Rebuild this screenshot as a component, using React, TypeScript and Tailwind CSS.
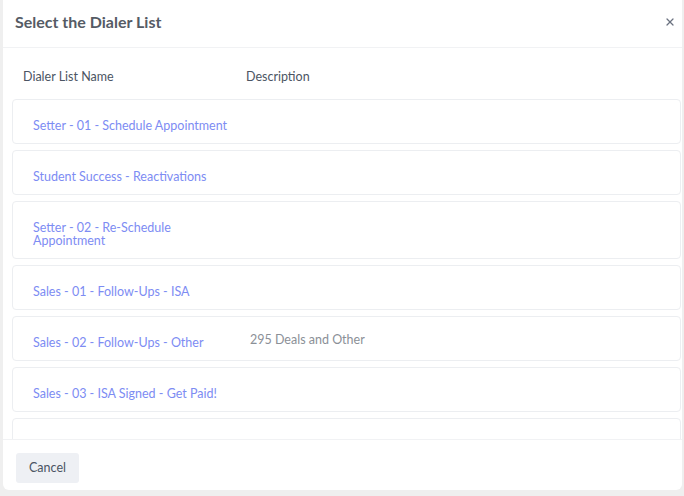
import { X } from "lucide-react";

const lists = [
  { name: "Setter - 01 - Schedule Appointment", description: "" },
  { name: "Student Success - Reactivations", description: "" },
  { name: "Setter - 02 - Re-Schedule Appointment", description: "" },
  { name: "Sales - 01 - Follow-Ups - ISA", description: "" },
  { name: "Sales - 02 - Follow-Ups - Other", description: "295 Deals and Other" },
  { name: "Sales - 03 - ISA Signed - Get Paid!", description: "" },
];

export default function App() {
  return (
    <div className="h-[496px] w-[684px] overflow-hidden bg-[#efefef] font-['Lato',sans-serif]">
      <div className="ml-[3px] flex h-[490px] w-[679px] flex-col rounded-b-md bg-white">
        {/* header */}
        <div className="flex h-[48px] shrink-0 items-center justify-between border-b border-[#f1f2f4] pb-[4px] pl-[12px] pr-[2px]">
          <h2 className="text-[16px] font-bold text-[#555b65]">Select the Dialer List</h2>
          <button className="p-1 text-[#6b7280]">
            <X className="h-3 w-3" strokeWidth={2.5} />
          </button>
        </div>

        {/* list */}
        <div className="flex-1 overflow-hidden pl-[9px] pr-[1px]">
          <div className="flex h-[51px] items-center pt-[8px] text-[12.5px] text-[#4b5563]">
            <div className="w-[234px] pl-[11px]">Dialer List Name</div>
            <div>Description</div>
          </div>
          <div className="flex flex-col gap-[6px]">
            {lists.map((item) => (
              <div
                key={item.name}
                className="flex rounded-[4px] border border-[#eceef1] bg-white"
              >
                <div className="w-[237px] shrink-0 pb-[11px] pl-[20px] pr-[14px] pt-[19px] text-[12.5px] leading-[13px] text-[#7d8cf3]">
                  {item.name}
                </div>
                <div className="pt-[16px] text-[12.5px] leading-[13px] text-[#8b9097]">
                  {item.description}
                </div>
              </div>
            ))}
            {/* next row, scrolled below the footer */}
            <div className="h-[45px] rounded-[4px] border border-[#eceef1] bg-white" />
          </div>
        </div>

        {/* footer */}
        <div className="h-[51px] shrink-0 border-t border-[#f1f2f4] pl-[13px] pt-[13px]">
          <button className="h-[30px] rounded-[3px] bg-[#eef0f4] px-[13px] text-[12.5px] text-[#4b5563]">
            Cancel
          </button>
        </div>
      </div>
    </div>
  );
}
